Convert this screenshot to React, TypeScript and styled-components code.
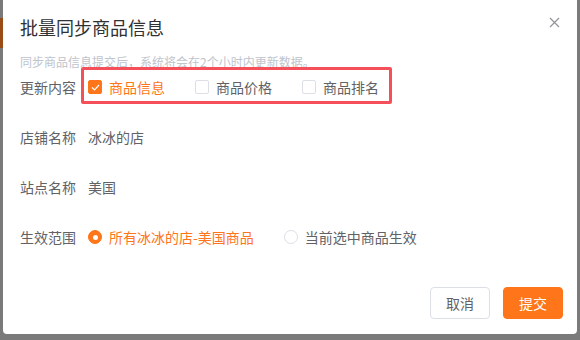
import React from 'react';
import styled, { createGlobalStyle } from 'styled-components';

const GlobalStyle = createGlobalStyle`
  html, body {
    margin: 0;
    padding: 0;
    background: #7a7a7a;
    overflow: hidden;
  }
  body {
    font-family: "Noto Sans CJK SC", "Noto Sans", "Liberation Sans", sans-serif;
  }
`;

const ORANGE = '#ff7519';

const Backdrop = styled.div`
  display: flex;
  width: 580px;
  height: 340px;
  overflow: hidden;
`;

const PagePeek = styled.div`
  width: 3px;
  flex-shrink: 0;
  padding-top: 18px;

  span {
    display: block;
    height: 30px;
    background: #9a4c16;
  }
`;

const Dialog = styled.div`
  position: relative;
  width: 574px;
  height: 340px;
  margin-top: -6px;
  box-sizing: border-box;
  background: #ffffff;
  border-radius: 4px;
  padding: 21px 14px 15px 17px;
  display: flex;
  flex-direction: column;
`;

const Title = styled.h2`
  margin: 0;
  font-size: 18px;
  line-height: 24px;
  font-weight: 400;
  color: #303133;
`;

const CloseButton = styled.button`
  position: absolute;
  top: 21px;
  right: 16px;
  width: 14px;
  height: 14px;
  padding: 0;
  border: none;
  background: none;
  display: flex;
  align-items: center;
  justify-content: center;
  cursor: pointer;
`;

const Hint = styled.p`
  margin: 15px 0 1px;
  font-size: 12px;
  line-height: 16px;
  color: #c0c4cc;
`;

const Form = styled.div`
  display: flex;
  flex-direction: column;
  gap: 18px;
`;

const Row = styled.div`
  display: flex;
  align-items: center;
  height: 32px;
  font-size: 14px;
  color: #606266;
`;

const Label = styled.span`
  width: 68px;
  flex-shrink: 0;
`;

const Group = styled.div`
  position: relative;
  display: flex;
  align-items: center;
  gap: 30px;
`;

const Annotation = styled.span`
  position: absolute;
  left: -7px;
  right: -13px;
  top: -10px;
  bottom: -7px;
  border: 3px solid #f5505a;
  border-radius: 2px;
  pointer-events: none;
`;

const Option = styled.label<{ $active?: boolean }>`
  display: flex;
  align-items: center;
  gap: 7px;
  color: ${(p) => (p.$active ? ORANGE : '#606266')};
  cursor: pointer;
`;

const Box = styled.span<{ $checked?: boolean }>`
  width: 14px;
  height: 14px;
  box-sizing: border-box;
  border-radius: 2px;
  border: 1px solid ${(p) => (p.$checked ? ORANGE : '#dcdfe6')};
  background: ${(p) => (p.$checked ? ORANGE : '#fff')};
  display: flex;
  align-items: center;
  justify-content: center;
`;

const Dot = styled.span<{ $checked?: boolean }>`
  width: 14px;
  height: 14px;
  box-sizing: border-box;
  border-radius: 50%;
  border: 1px solid ${(p) => (p.$checked ? ORANGE : '#dcdfe6')};
  background: ${(p) => (p.$checked ? ORANGE : '#fff')};
  display: flex;
  align-items: center;
  justify-content: center;

  &::after {
    content: '';
    width: 5px;
    height: 5px;
    border-radius: 50%;
    background: #fff;
    display: ${(p) => (p.$checked ? 'block' : 'none')};
  }
`;

const Footer = styled.div`
  margin-top: auto;
  display: flex;
  justify-content: flex-end;
  gap: 13px;
`;

const Button = styled.button<{ $primary?: boolean }>`
  width: 60px;
  height: 32px;
  border-radius: 4px;
  font-family: inherit;
  font-size: 14px;
  border: 1px solid ${(p) => (p.$primary ? ORANGE : '#dcdfe6')};
  background: ${(p) => (p.$primary ? ORANGE : '#fff')};
  color: ${(p) => (p.$primary ? '#fff' : '#606266')};
  cursor: pointer;
`;

const Check = () => (
  <svg width="9" height="7" viewBox="0 0 9 7">
    <path d="M1 3.5 L3.5 6 L8 1" fill="none" stroke="#fff" strokeWidth="1.2" />
  </svg>
);

export default function App() {
  return (
    <>
      <GlobalStyle />
      <Backdrop>
        <PagePeek>
          <span />
        </PagePeek>
        <Dialog>
          <Title>批量同步商品信息</Title>
          <CloseButton aria-label="关闭">
            <svg width="11" height="11" viewBox="0 0 11 11">
              <path d="M1 1 L10 10 M10 1 L1 10" stroke="#909399" strokeWidth="1.2" />
            </svg>
          </CloseButton>
          <Hint>同步商品信息提交后，系统将会在2个小时内更新数据。</Hint>
          <Form>
            <Row>
              <Label>更新内容</Label>
              <Group>
                <Annotation />
                <Option $active>
                  <Box $checked>
                    <Check />
                  </Box>
                  商品信息
                </Option>
                <Option>
                  <Box />
                  商品价格
                </Option>
                <Option>
                  <Box />
                  商品排名
                </Option>
              </Group>
            </Row>
            <Row>
              <Label>店铺名称</Label>
              <span>冰冰的店</span>
            </Row>
            <Row>
              <Label>站点名称</Label>
              <span>美国</span>
            </Row>
            <Row>
              <Label>生效范围</Label>
              <Group>
                <Option $active>
                  <Dot $checked />
                  所有冰冰的店-美国商品
                </Option>
                <Option>
                  <Dot />
                  当前选中商品生效
                </Option>
              </Group>
            </Row>
          </Form>
          <Footer>
            <Button>取消</Button>
            <Button $primary>提交</Button>
          </Footer>
        </Dialog>
      </Backdrop>
    </>
  );
}
